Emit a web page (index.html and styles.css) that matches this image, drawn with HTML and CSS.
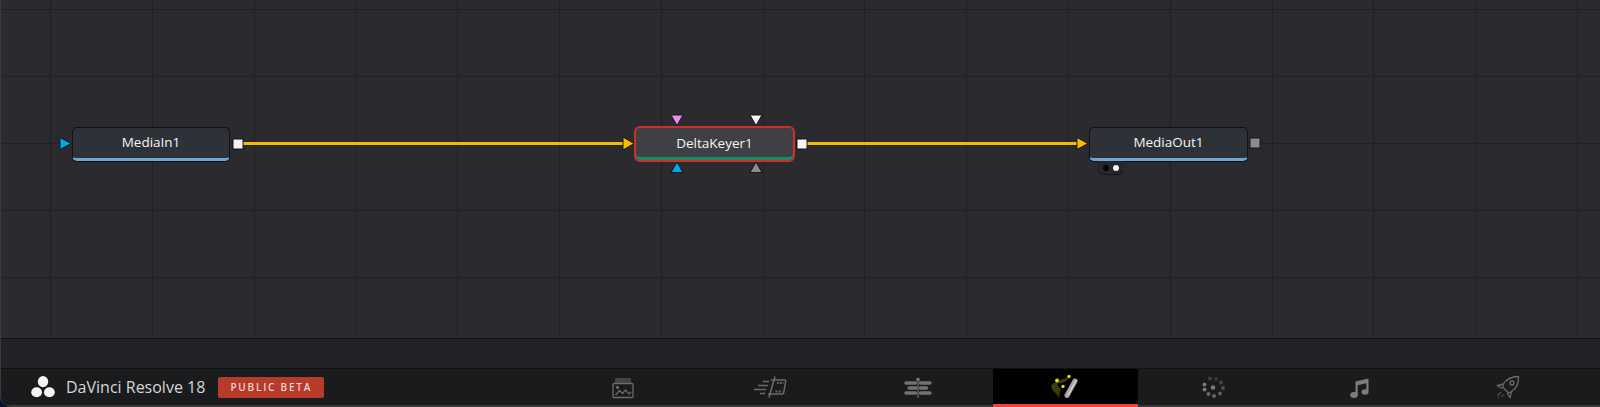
FILE: index.html
```html
<!DOCTYPE html>
<html lang="en">
<head>
  <meta charset="UTF-8" />
  <title>DaVinci Resolve 18 | Fusion</title>
  <link rel="stylesheet" href="styles.css">
</head>
<body>
  <div class="app">

    <!-- Node graph -->
    <div class="canvas">
      <svg class="wires" width="1600" height="338" viewBox="0 0 1600 338">
        <g class="wire">
          <line x1="242" y1="143.5" x2="626" y2="143.5"/>
          <line x1="807" y1="143.5" x2="1080" y2="143.5"/>
        </g>
        <polygon class="port port-blue" points="60,137.500 71,143.500 60,149.500"/>
        <polygon class="port port-yellow" points="623,137 634,143.500 623,150"/>
        <polygon class="port port-yellow" points="1077,137.500 1088,143.500 1077,149.500"/>
        <rect class="port port-white" x="233" y="139" width="10" height="10"/>
        <rect class="port port-white" x="797" y="139" width="10" height="10"/>
        <rect class="port port-gray" x="1250" y="138" width="10" height="10"/>
        <polygon class="port port-pink" points="671,115 683,115 677,125.500"/>
        <polygon class="port port-white" points="750,115 762,115 756,125.500"/>
        <polygon class="port port-blue" points="671,172.500 683,172.500 677,162"/>
        <polygon class="port port-gray" points="750,172.500 762,172.500 756,162"/>
      </svg>

      <div class="node node-media node-in">MediaIn1</div>
      <div class="node node-key">DeltaKeyer1</div>
      <div class="node node-media node-out">MediaOut1</div>
      <div class="view-tab"><span class="dot dot-black"></span><span class="dot dot-white"></span></div>
    </div>

    <div class="strip"></div>

    <!-- Bottom page bar -->
    <div class="pagebar">
      <div class="brand">
        <svg class="logo" width="24" height="24" viewBox="0 0 24 24">
          <ellipse cx="12" cy="6.600" rx="5.200" ry="5.600"/>
          <ellipse cx="5.600" cy="17.200" rx="5.400" ry="5"/>
          <ellipse cx="18.400" cy="17.200" rx="5.400" ry="5"/>
        </svg>
        <span class="brand-name">DaVinci Resolve 18</span>
        <span class="badge">PUBLIC BETA</span>
      </div>

      <div class="tabs">
        <div class="tab">
          <svg width="26" height="24" viewBox="0 0 26 24" class="icon">
            <rect x="5" y="3" width="16" height="5.500" rx="1" class="stack"/>
            <rect x="3" y="8.500" width="20" height="14" rx="1"/>
            <circle cx="7.500" cy="12.500" r="1.400" class="fill"/>
            <path d="M5.500 20l4-4.500 3 3 3-3.500 3.500 4 2-2"/>
          </svg>
        </div>
        <div class="tab">
          <svg width="34" height="24" viewBox="0 0 34 24" class="icon">
            <path d="M10 6.500h6M5 10.500h10M1 14.500h12M7 18.500h5" stroke-width="1.700"/>
            <path d="M18 5h13.500q1.500 0 1.200 1.500l-2 11q-.3 1.500-1.500 1.500H15" stroke-width="1.500"/>
            <path d="M22 1.500l-6 21" stroke-width="1.500"/>
            <path d="M24 8h6.500M22.500 16.500h6.500" stroke-width="1.800" stroke-dasharray="1.800 1.200"/>
          </svg>
        </div>
        <div class="tab">
          <svg width="28" height="24" viewBox="0 0 28 24" class="icon icon-edit">
            <path d="M14 3v20" stroke-width="1.200"/>
            <circle cx="14" cy="4.500" r="1.800" class="fill"/>
            <path d="M2 8h9.500M5 13h7M2 18h9.500M16.500 8h9.500M16.500 13h6M16.500 18h9.500" stroke-width="3.400" stroke-linecap="round"/>
          </svg>
        </div>
        <div class="tab tab-active">
          <svg width="30" height="28" viewBox="0 0 30 28">
            <path d="M1.500 12c-.5 5 3 7 5 9l2.500 4c.5-4 .5-6 2-9-2-2-4-3-3-6 4 1 9-1 11.500-6.500C14 6 8 7 1.500 12z" fill="#3c3c10"/>
            <g fill="#dcdc1e">
              <circle cx="7" cy="7.500" r="1.900"/>
              <circle cx="19" cy="3.500" r="1.700"/>
              <circle cx="13" cy="13.500" r="1.700"/>
            </g>
            <path d="M25 8L17 22.500" stroke="#a4a4a8" stroke-width="5" stroke-linecap="round"/>
            <path d="M26 7.500L18 22" stroke="#d8d8dc" stroke-width="1.200" stroke-linecap="round"/>
          </svg>
        </div>
        <div class="tab">
          <svg width="24" height="24" viewBox="0 0 24 24" class="dots">
            <circle cx="9" cy="3.500" r="1.900" opacity=".4"/>
            <circle cx="15" cy="4" r="1.900" opacity=".3"/>
            <circle cx="20" cy="7.500" r="1.900" opacity=".45"/>
            <circle cx="22" cy="13" r="1.900" opacity=".55"/>
            <circle cx="19" cy="18.500" r="1.900" opacity=".75"/>
            <circle cx="13" cy="21" r="2" opacity=".8"/>
            <circle cx="7.500" cy="19" r="1.900" opacity=".85"/>
            <circle cx="3.500" cy="14.500" r="1.900"/>
            <circle cx="3.500" cy="9.500" r="1.900"/>
            <circle cx="12" cy="12.500" r="2.200"/>
          </svg>
        </div>
        <div class="tab">
          <svg width="24" height="24" viewBox="0 0 24 24" class="note">
            <path d="M7.500 6.500L20.500 3.500V17h-2.200V8.200L9.700 10.200V20H7.500z"/>
            <ellipse cx="6" cy="20" rx="3.800" ry="3"/>
            <ellipse cx="17" cy="17" rx="3.500" ry="2.800"/>
          </svg>
        </div>
        <div class="tab">
          <svg width="26" height="24" viewBox="0 0 26 24" class="icon">
            <path d="M8 9.500C11 4.500 17 1.500 23.500 1.500c.3 6.500-2 12-7 15l-3 1.500-5.500-5.500z"/>
            <circle cx="17" cy="8" r="2"/>
            <path d="M8.500 9l-6 1.500L7 13.500M16.500 16.500L15 22.500l-3-4.500"/>
            <path d="M6 17l-3.500 3.500M3 22.500l1-1M8.500 19.500l-2 2" opacity=".7"/>
          </svg>
        </div>
      </div>
    </div>
  </div>
</body>
</html>
```

FILE: styles.css
```css
/* Basic Reset & Font */
* {
  box-sizing: border-box;
  margin: 0;
  padding: 0;
}

body {
  width: 1600px;
  height: 407px;
  overflow: hidden;
  background: #0c1030;
  font-family: 'Open Sans', sans-serif;
}

.app {
  height: 407px;
  display: flex;
  flex-direction: column;
  background: #222226;
  border-left: 1px solid #3c3c40;
  border-bottom-left-radius: 11px;
  overflow: hidden;
}

/* Node graph with its grid */
.canvas {
  position: relative;
  height: 339px;
  margin-left: -1px;
  background-color: #2a2a2f;
  background-image:
    repeating-linear-gradient(to right, transparent 0, transparent 100.8px, #212125 100.8px, #212125 101.8px),
    repeating-linear-gradient(to bottom, transparent 0, transparent 66.2px, #212125 66.2px, #212125 67.2px);
  background-size: 2000px 600px;
  background-position: -50.8px -57.7px;
  border-bottom: 1px solid #111113;
}

.wires {
  position: absolute;
  left: 0;
  top: 0;
}

.wire line {
  stroke: #f5b900;
  stroke-width: 3;
}

.port {
  stroke: #17171a;
  stroke-width: 1;
}
.port-blue { fill: #00a9ee; }
.port-yellow { fill: #f5bc00; }
.port-white { fill: #f4f4f4; }
.port-gray { fill: #8c8c8c; }
.port-pink { fill: #ee8be8; }

/* Nodes */
.node {
  position: absolute;
  display: flex;
  justify-content: center;
  align-items: center;
  color: #f4f4f4;
  font-size: 13.5px;
  border-radius: 5px;
}

.node-media {
  top: 127px;
  width: 158px;
  height: 34px;
  padding-bottom: 3px;
  background: #2f3138;
  border: 1px solid #121214;
  border-bottom: 3px solid #6ea5d2;
  box-shadow: 0 1px 0 #121214;
}

.node-in { left: 72px; }
.node-out { left: 1089px; width: 159px; }

.node-key {
  left: 634px;
  top: 126px;
  width: 161px;
  height: 36px;
  padding-bottom: 3px;
  background: #3e4045;
  border: 2px solid #cf2f2b;
  border-radius: 6px;
  box-shadow: inset 0 -3px 0 #1c8a5f;
}

.view-tab {
  position: absolute;
  left: 1098px;
  top: 161px;
  width: 25px;
  height: 13px;
  display: flex;
  justify-content: center;
  align-items: center;
  gap: 4px;
  background: #26262a;
  border-radius: 0 0 5px 5px;
  box-shadow: 0 1px 1px #151517;
}

.dot {
  width: 6px;
  height: 6px;
  border-radius: 50%;
}
.dot-black { background: #050505; }
.dot-white { background: #f4f4f4; }

.strip {
  height: 30px;
  background: #222226;
  border-bottom: 1px solid #101012;
}

/* Bottom page bar */
.pagebar {
  flex: 1;
  display: flex;
  justify-content: space-between;
  padding-right: 18.5px;
  background: #1a1b1d;
  border-bottom: 2px solid #38383b;
}

.brand {
  display: flex;
  align-items: center;
  padding-left: 30px;
}

.logo {
  fill: #f6f6f6;
}

.brand-name {
  margin-left: 11px;
  color: #d6d6d6;
  font-size: 16px;
}

.badge {
  margin-left: 13px;
  width: 106px;
  height: 21px;
  display: flex;
  justify-content: center;
  align-items: center;
  background: #b83a2a;
  border-radius: 2px;
  color: #ecd6d0;
  font-size: 10px;
  font-weight: 600;
  letter-spacing: 1.8px;
}

.tabs {
  display: flex;
}

.tab {
  width: 147.5px;
  display: flex;
  justify-content: center;
  align-items: center;
  margin-bottom: -2px;
  padding-bottom: 2px;
}

.tab-active {
  width: 145.5px;
  margin-left: 1px;
  margin-right: 1px;
  background: #000;
  border-bottom: 3px solid #ee4338;
  padding-bottom: 0;
}

/* Page icons */
.icon {
  fill: none;
  stroke: #6a6a6c;
  stroke-width: 1.3;
}
.icon .fill {
  fill: #7a7a7c;
  stroke: none;
}
.icon .stack {
  fill: #454547;
  stroke: none;
}
.icon-edit {
  stroke: #727274;
}
.dots {
  fill: #7a7a7c;
}
.note {
  fill: #7c7c7e;
}
```
